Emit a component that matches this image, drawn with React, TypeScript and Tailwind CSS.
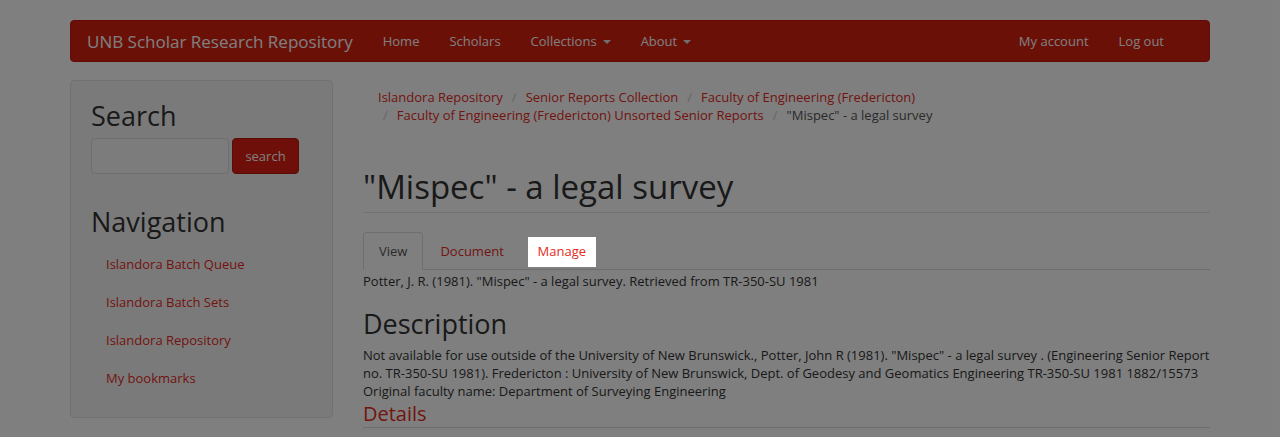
import React from "react";

const font = { fontFamily: '"Open Sans", "Liberation Sans", sans-serif' };

const Caret = () => (
	<span className="ml-[6px] inline-block h-0 w-0 border-x-[4px] border-t-[4px] border-x-transparent border-t-[#e0e0e0] align-middle" />
);

const Navbar = () => (
	<div className="flex h-[42px] items-center rounded-[4px] border border-[#c0180e] bg-[#d6200f] px-4 pt-[1px] text-[13px] text-white">
		<span className="mr-[15px] text-[17px] text-white">UNB Scholar Research Repository</span>
		<a className="px-[15px]">Home</a>
		<a className="px-[15px]">Scholars</a>
		<a className="flex items-center px-[15px]">Collections<Caret /></a>
		<a className="flex items-center px-[15px]">About<Caret /></a>
		<div className="ml-auto flex pr-[14px]">
			<a className="px-[15px]">My account</a>
			<a className="px-[15px]">Log out</a>
		</div>
	</div>
);

const Sidebar = () => (
	<aside className="w-[263px] shrink-0 self-start rounded-[4px] border border-[#e3e3e3] bg-[#f5f5f5] px-[20px] pt-[18px] pb-[19px]">
		<h2 className="text-[27px] leading-[34px] text-[#333]">Search</h2>
		<div className="mt-[5px] flex gap-[3px]">
			<input className="h-[36px] w-[138px] rounded-[4px] border border-[#ddd] bg-[#f8f8f8]" />
			<button className="h-[36px] w-[67px] rounded-[4px] border border-[#b51b10] bg-[#dc1f12] pt-[1px] text-[13px] text-white">
				search
			</button>
		</div>
		<h2 className="mt-[31px] text-[27px] leading-[34px] text-[#333]">Navigation</h2>
		<ul className="mt-[7px] flex flex-col text-[13px] text-[#e52a1e]">
			{["Islandora Batch Queue", "Islandora Batch Sets", "Islandora Repository", "My bookmarks"].map((item) => (
				<li key={item} className="flex h-[38px] items-center px-[15px]">
					{item}
				</li>
			))}
		</ul>
	</aside>
);

const Sep = () => <span className="px-[9px] text-[#ccc]">/</span>;

const Breadcrumb = () => (
	<div className="px-[15px] pt-[8px] text-[13px] leading-[18px] text-[#e52a1e]">
		<div>
			Islandora Repository<Sep />Senior Reports Collection<Sep />Faculty of Engineering (Fredericton)
		</div>
		<div className="ml-[-4px]">
			<Sep />Faculty of Engineering (Fredericton) Unsorted Senior Reports<Sep />
			<span className="text-[#555]">"Mispec" - a legal survey</span>
		</div>
	</div>
);

export default function App() {
	return (
		<div className="relative h-[437px] overflow-hidden bg-white" style={font}>
			<div className="px-[70px] pt-[20px]">
				<Navbar />
				<div className="mt-[18px] flex gap-[30px]">
					<Sidebar />
					<main className="flex-1">
						<Breadcrumb />
						<h1 className="mt-[43px] border-b border-[#e5e5e5] pb-[5px] text-[33px] leading-[40px] text-[#333]">
							"Mispec" - a legal survey
						</h1>
						<div className="mt-[19px] flex items-end border-b border-[#ddd] text-[13px]">
							<div className="mb-[-1px] rounded-t-[4px] border border-[#ddd] border-b-white bg-white px-[15px] py-[9px] leading-[18px] text-[#555]">
								View
							</div>
							<div className="ml-[2px] px-[15px] py-[9px] leading-[18px] text-[#e52a1e]">Document</div>
							{/* highlighted by the tour, sits above the overlay */}
							<div className="relative z-10 mb-[2px] ml-[9px] flex h-[30px] w-[68px] items-center justify-center bg-white text-[#e52a1e]">
								Manage
							</div>
						</div>
						<p className="mt-[2px] text-[13px] leading-[18px] text-[#333]">
							Potter, J. R. (1981). "Mispec" - a legal survey. Retrieved from TR-350-SU 1981
						</p>
						<h2 className="mt-[17px] text-[27px] leading-[34px] text-[#333]">Description</h2>
						<p className="mt-[5px] whitespace-nowrap text-[13px] leading-[18px] text-[#333]">
							Not available for use outside of the University of New Brunswick., Potter, John R (1981). "Mispec" - a legal survey . (Engineering Senior Report
							<br />
							no. TR-350-SU 1981). Fredericton : University of New Brunswick, Dept. of Geodesy and Geomatics Engineering TR-350-SU 1981 1882/15573
							<br />
							Original faculty name: Department of Surveying Engineering
						</p>
						<h3 className="mt-[1px] border-b border-[#ddd] text-[20px] leading-[26px] text-[#e52a1e]">Details</h3>
					</main>
				</div>
			</div>
			<div className="absolute inset-0 bg-black/50" />
		</div>
	);
}
